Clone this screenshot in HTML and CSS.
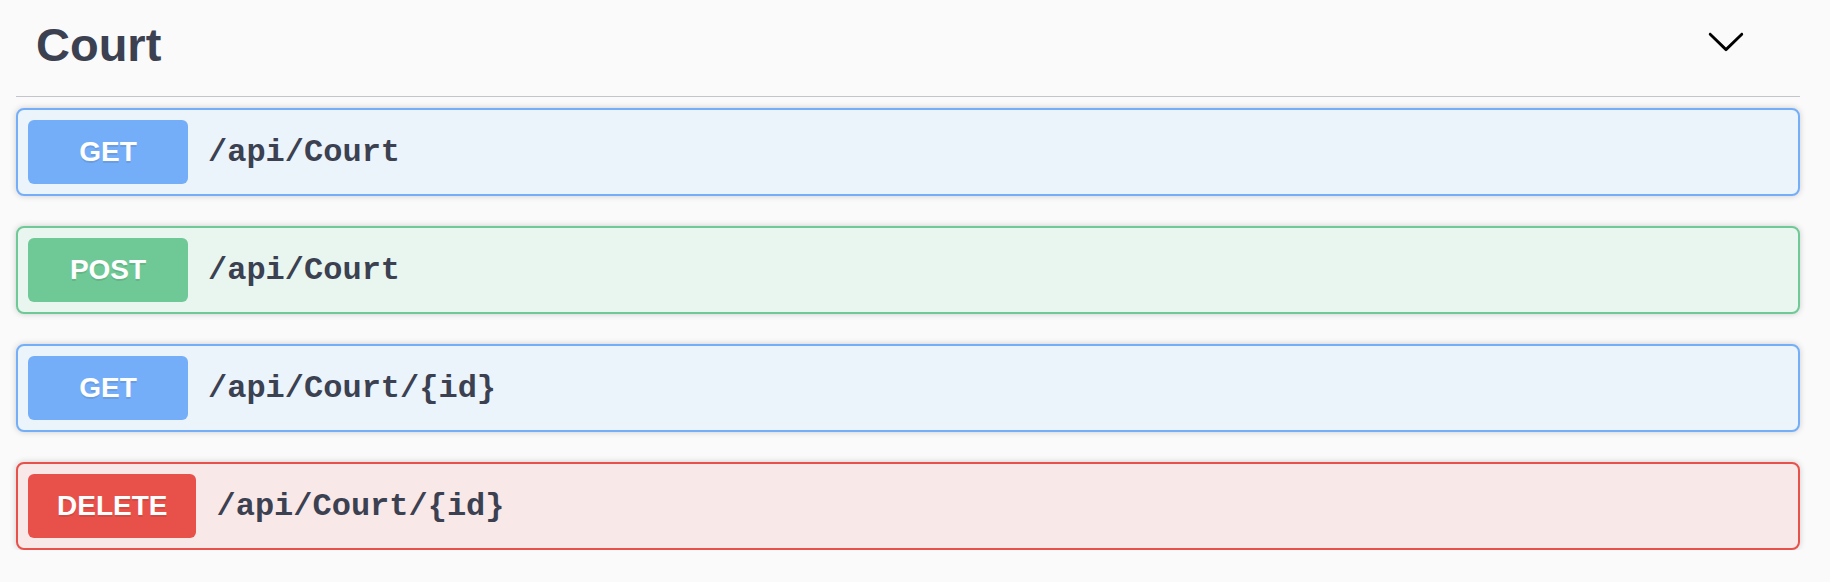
FILE: index.html
```html
<!DOCTYPE html>
<html lang="en">
<head>
<meta charset="utf-8">
<title>Court</title>
<link rel="stylesheet" href="styles.css">
</head>
<body>
<div class="wrapper">
  <section class="tag-section">
    <h4 class="tag-heading">
      <span class="tag-name">Court</span>
      <svg class="arrow" width="40" height="40" viewBox="0 0 20 20" aria-hidden="true">
        <path d="M17.418 6.109c.272-.268.709-.268.979 0s.271.701 0 .969l-7.908 7.83c-.27.268-.707.268-.979 0l-7.908-7.830c-.27-.268-.27-.701 0-.969.271-.268.709-.268.979 0L10 13.25l7.418-7.141z"/>
      </svg>
    </h4>
    <div class="ops">
      <div class="opblock op-get">
        <span class="method">GET</span>
        <span class="path">/api/Court</span>
      </div>
      <div class="opblock op-post">
        <span class="method">POST</span>
        <span class="path">/api/Court</span>
      </div>
      <div class="opblock op-get">
        <span class="method">GET</span>
        <span class="path">/api/Court/{id}</span>
      </div>
      <div class="opblock op-delete">
        <span class="method">DELETE</span>
        <span class="path">/api/Court/{id}</span>
      </div>
    </div>
  </section>
</div>
</body>
</html>
```

FILE: styles.css
```css
html, body {
  margin: 0;
  padding: 0;
  background: #fafafa;
}

.wrapper {
  padding: 0 30px 0 16px;
}

.tag-heading {
  box-sizing: border-box;
  display: flex;
  align-items: center;
  justify-content: space-between;
  height: 97px;
  margin: 0 0 11px;
  padding: 0 54px 7px 20px;
  border-bottom: 1px solid #c4c5ca;
  font-family: "Liberation Sans", Arial, sans-serif;
  font-size: 47px;
  font-weight: 700;
  line-height: 48px;
  color: #3b4151;
}

.arrow {
  display: block;
  margin-bottom: 7px;
  fill: #000;
}

.ops {
  display: flex;
  flex-direction: column;
  gap: 30px;
}

.opblock {
  box-sizing: border-box;
  display: flex;
  align-items: center;
  height: 88px;
  padding: 10px;
  border: 2px solid;
  border-radius: 8px;
  box-shadow: 0 0 6px rgba(0, 0, 0, 0.19);
}

.method {
  box-sizing: border-box;
  display: flex;
  align-items: center;
  justify-content: center;
  min-width: 160px;
  height: 64px;
  padding: 0 29px;
  border-radius: 6px;
  font-family: "Liberation Sans", Arial, sans-serif;
  font-size: 28px;
  font-weight: 700;
  color: #fff;
  text-shadow: 0 2px 0 rgba(0, 0, 0, 0.1);
}

.path {
  padding: 0 20px;
  font-family: "Liberation Mono", "Courier New", monospace;
  font-size: 32px;
  font-weight: 700;
  color: #3b4151;
}

.op-get {
  background: #ebf3fb;
  border-color: #74aef8;
}
.op-get .method {
  background: #74aef8;
}

.op-post {
  background: #e9f6ef;
  border-color: #6fc996;
}
.op-post .method {
  background: #6fc996;
}

.op-delete {
  background: #f9e8e8;
  border-color: #e8504a;
}
.op-delete .method {
  background: #e8504a;
}
```
